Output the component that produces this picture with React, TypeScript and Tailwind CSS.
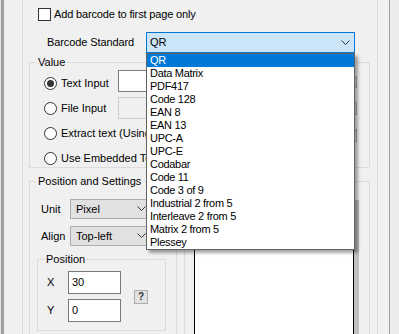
import React from "react";

const Chevron = ({ color = "#333" }: { color?: string }) => (
  <svg width="9" height="6" viewBox="0 0 9 6" className="block">
    <polyline points="0.5,0.5 4.5,4.5 8.5,0.5" fill="none" stroke={color} strokeWidth="1" />
  </svg>
);

const Radio = ({ checked = false }: { checked?: boolean }) => (
  <div className="w-[13px] h-[13px] rounded-full border border-[#333] bg-white flex items-center justify-center shrink-0">
    {checked && <div className="w-[7px] h-[7px] rounded-full bg-[#333]" />}
  </div>
);

const items = [
  "QR",
  "Data Matrix",
  "PDF417",
  "Code 128",
  "EAN 8",
  "EAN 13",
  "UPC-A",
  "UPC-E",
  "Codabar",
  "Code 11",
  "Code 3 of 9",
  "Industrial 2 from 5",
  "Interleave 2 from 5",
  "Matrix 2 from 5",
  "Plessey",
];

export default function App() {
  return (
    <div
      className="relative w-[399px] h-[334px] overflow-hidden bg-[#f0f0f0] flex text-[11px] leading-[13px] text-black"
      style={{ fontFamily: '"Liberation Sans", Arial, sans-serif' }}
    >
      {/* left window edge */}
      <div className="w-[4px] flex shrink-0">
        <div className="w-[1px] bg-[#e3e3e3]" />
        <div className="w-[3px] bg-[#a0a0a0]" />
      </div>
      <div className="w-[18px] shrink-0" />
      {/* main panel */}
      <div className="w-[356px] shrink-0 border-x border-[#dcdcdc] flex flex-col">
        {/* checkbox row */}
        <div className="flex items-center pt-[8px] pl-[15px] h-[21px]">
          <div className="w-[13px] h-[13px] border border-[#333] bg-white shrink-0" />
          <span className="ml-[3px] tracking-[-0.15px]">Add barcode to first page only</span>
        </div>
        {/* barcode standard row */}
        <div className="flex items-center mt-[11px] h-[21px]">
          <span className="w-[123px] pl-[24px] tracking-[-0.1px]">Barcode Standard</span>
          <div className="w-[209px] h-[21px] border border-[#0078d7] bg-[#cce4f7] flex items-center justify-between pl-[3px] pr-[4px]">
            <span>QR</span>
            <Chevron />
          </div>
        </div>
        {/* Value group */}
        <fieldset className="ml-[6px] mt-[3px] w-[341px] h-[112px] border border-[#dcdcdc] px-0 pb-0 pt-0 min-w-0">
          <legend className="ml-[6px] px-[2px] leading-[13px]">Value</legend>
          <div className="flex flex-col pl-[14px] pt-[1px]">
            <div className="flex h-[22px] items-start">
              <div className="flex items-center w-[74px] h-[22px] mt-[2px]">
                <Radio checked />
                <span className="ml-[4px]">Text Input</span>
              </div>
              <div className="w-[200px] h-[22px] border border-[#7a7a7a] bg-white" />
              <div className="ml-[4px] mt-[6px] w-[35px] h-[12px] border border-[#adadad] bg-[#e1e1e1]" />
            </div>
            <div className="flex h-[22px] items-start mt-[5px]">
              <div className="flex items-center w-[74px] h-[22px]">
                <Radio />
                <span className="ml-[4px]">File Input</span>
              </div>
              <div className="w-[200px] h-[22px] border border-[#cccccc] bg-[#f0f0f0]" />
              <div className="ml-[4px] mt-[5px] w-[35px] h-[13px] border border-[#adadad] bg-[#e1e1e1]" />
            </div>
            <div className="flex h-[22px] items-center mt-[3px]">
              <Radio />
              <span className="ml-[4px] w-[84px] whitespace-nowrap">Extract text (Using</span>
              <div className="ml-[177px] mt-[4px] w-[35px] h-[13px] border border-[#adadad] bg-[#e1e1e1]" />
            </div>
            <div className="flex h-[22px] items-center mt-[3px]">
              <Radio />
              <span className="ml-[4px] whitespace-nowrap">Use Embedded Te</span>
            </div>
          </div>
        </fieldset>
        {/* Position and Settings group */}
        <fieldset className="ml-[6px] mt-[7px] w-[341px] h-[200px] border border-[#dcdcdc] p-0 min-w-0">
          <legend className="ml-[6px] px-[2px] leading-[13px]">Position and Settings</legend>
          <div className="flex">
            {/* left column */}
            <div className="flex flex-col w-[135px] pt-[11px]">
              <div className="flex items-center pl-[11px] h-[20px]">
                <span className="w-[29px]">Unit</span>
                <div className="w-[83px] h-[20px] border border-[#adadad] bg-[#e1e1e1] flex items-center justify-between pl-[5px] pr-[6px]">
                  <span>Pixel</span>
                  <Chevron />
                </div>
              </div>
              <div className="flex items-center pl-[11px] h-[20px] mt-[7px]">
                <span className="w-[29px]">Align</span>
                <div className="w-[83px] h-[20px] border border-[#adadad] bg-[#e1e1e1] flex items-center justify-between pl-[5px] pr-[6px]">
                  <span>Top-left</span>
                  <Chevron />
                </div>
              </div>
              <fieldset className="ml-[7px] mt-[7px] w-[129px] h-[78px] border border-[#dcdcdc] p-0 min-w-0">
                <legend className="ml-[7px] px-[1px] leading-[13px]">Position</legend>
                <div className="flex items-center">
                  <div className="flex flex-col pl-[9px] pt-[5px]">
                    <div className="flex items-center h-[23px]">
                      <span className="w-[21px]">X</span>
                      <div className="w-[53px] h-[23px] border border-[#7a7a7a] bg-white pl-[3px] flex items-center">30</div>
                    </div>
                    <div className="flex items-center h-[23px] mt-[5px]">
                      <span className="w-[21px]">Y</span>
                      <div className="w-[53px] h-[23px] border border-[#7a7a7a] bg-white pl-[3px] flex items-center">0</div>
                    </div>
                  </div>
                  <div className="ml-[13px] mt-[5px] w-[14px] h-[14px] border border-[#adadad] bg-[#e1e1e1] flex items-center justify-center text-[10px] font-bold text-[#333]">
                    ?
                  </div>
                </div>
              </fieldset>
            </div>
            {/* right column */}
            <div className="flex pt-[12px]">
              <div className="ml-[11px] w-[8px] border-l border-[#dcdcdc]" />
              <div className="w-[10px] border-l border-[#dcdcdc]" />
              <div className="flex">
                <div className="w-[160px] h-[200px] border border-black bg-white" />
                <div className="w-[5px] bg-[#bfbfbf]" />
              </div>
            </div>
          </div>
        </fieldset>
      </div>
      <div className="w-[11px] shrink-0" />
      <div className="w-[1px] shrink-0 bg-[#a0a0a0]" />
      <div className="flex-1 bg-[#ececec]" />

      {/* open dropdown list */}
      <div className="absolute left-[146px] top-[53px] w-[209px] h-[197px] border border-[#646464] bg-white shadow-[3px_3px_3px_rgba(0,0,0,0.35)] flex flex-col py-0 tracking-[-0.3px]">
        {items.map((it, i) => (
          <div
            key={it}
            className={
              i === 0
                ? "h-[13px] leading-[13px] pl-[3px] bg-[#0078d7] text-white"
                : "h-[13px] leading-[13px] pl-[3px]"
            }
          >
            {it}
          </div>
        ))}
      </div>
    </div>
  );
}
